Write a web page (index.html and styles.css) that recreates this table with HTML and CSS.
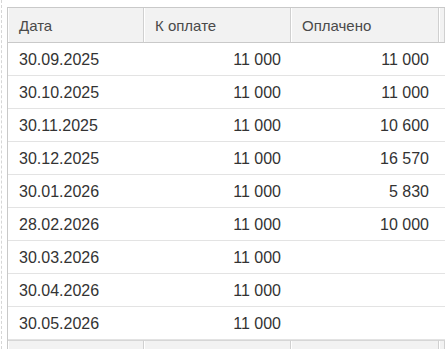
FILE: index.html
```html
<!DOCTYPE html>
<html lang="ru">
<head>
<meta charset="utf-8">
<link rel="stylesheet" href="styles.css">
</head>
<body>
<div class="frame">
  <table class="grid">
    <colgroup>
      <col class="c-date"><col class="c-due"><col class="c-paid"><col class="c-extra">
    </colgroup>
    <thead>
      <tr><th>Дата</th><th>К оплате</th><th>Оплачено</th><th></th></tr>
    </thead>
    <tbody>
      <tr><td>30.09.2025</td><td class="num">11 000</td><td class="num">11 000</td><td></td></tr>
      <tr><td>30.10.2025</td><td class="num">11 000</td><td class="num">11 000</td><td></td></tr>
      <tr><td>30.11.2025</td><td class="num">11 000</td><td class="num">10 600</td><td></td></tr>
      <tr><td>30.12.2025</td><td class="num">11 000</td><td class="num">16 570</td><td></td></tr>
      <tr><td>30.01.2026</td><td class="num">11 000</td><td class="num">5 830</td><td></td></tr>
      <tr><td>28.02.2026</td><td class="num">11 000</td><td class="num">10 000</td><td></td></tr>
      <tr><td>30.03.2026</td><td class="num">11 000</td><td class="num"></td><td></td></tr>
      <tr><td>30.04.2026</td><td class="num">11 000</td><td class="num"></td><td></td></tr>
      <tr><td>30.05.2026</td><td class="num">11 000</td><td class="num"></td><td></td></tr>
    </tbody>
    <tfoot>
      <tr><td></td><td></td><td></td><td></td></tr>
    </tfoot>
  </table>
</div>
</body>
</html>
```

FILE: styles.css
```css
html, body {
  margin: 0;
  padding: 0;
  background: #fff;
  overflow: hidden;
  width: 445px;
  height: 349px;
}
.frame {
  margin-left: 1px;
  border-left: 1px dashed #d6d6d6;
  padding: 7px 0 0 5px;
  height: 349px;
  box-sizing: border-box;
  overflow: hidden;
  font-family: "Liberation Sans", Arial, sans-serif;
  font-size: 16px;
  color: #333;
}
.grid {
  border-collapse: separate;
  border-spacing: 0;
  table-layout: fixed;
  width: 438px;
  border-top: 1px solid #c9c9c9;
  border-left: 1px solid #c9c9c9;
}
.c-date { width: 136px; }
.c-due { width: 147px; }
.c-paid { width: 148px; }
.c-extra { width: 6px; }
.grid th {
  height: 35px;
  padding: 0 0 0 11px;
  text-align: left;
  font-weight: normal;
  font-size: 15px;
  color: #4a4a4a;
  background: #f2f2f2;
  border-right: 1px solid #d0d0d0;
  border-bottom: 1px solid #c9c9c9;
  box-shadow: inset 1px 0 #fff;
  box-sizing: border-box;
}
.grid td {
  height: 33px;
  padding: 1px 0 0 11px;
  border-bottom: 1px solid #e3e3e3;
  box-sizing: border-box;
  white-space: nowrap;
}
.grid td.num {
  text-align: right;
  padding: 1px 10px 0 0;
}
.grid tfoot td {
  height: 12px;
  background: #f2f2f2;
  border-top: 1px solid #d6d6d6;
  border-right: 1px solid #d0d0d0;
  box-shadow: inset 1px 0 #fff;
  border-bottom: none;
}
```
